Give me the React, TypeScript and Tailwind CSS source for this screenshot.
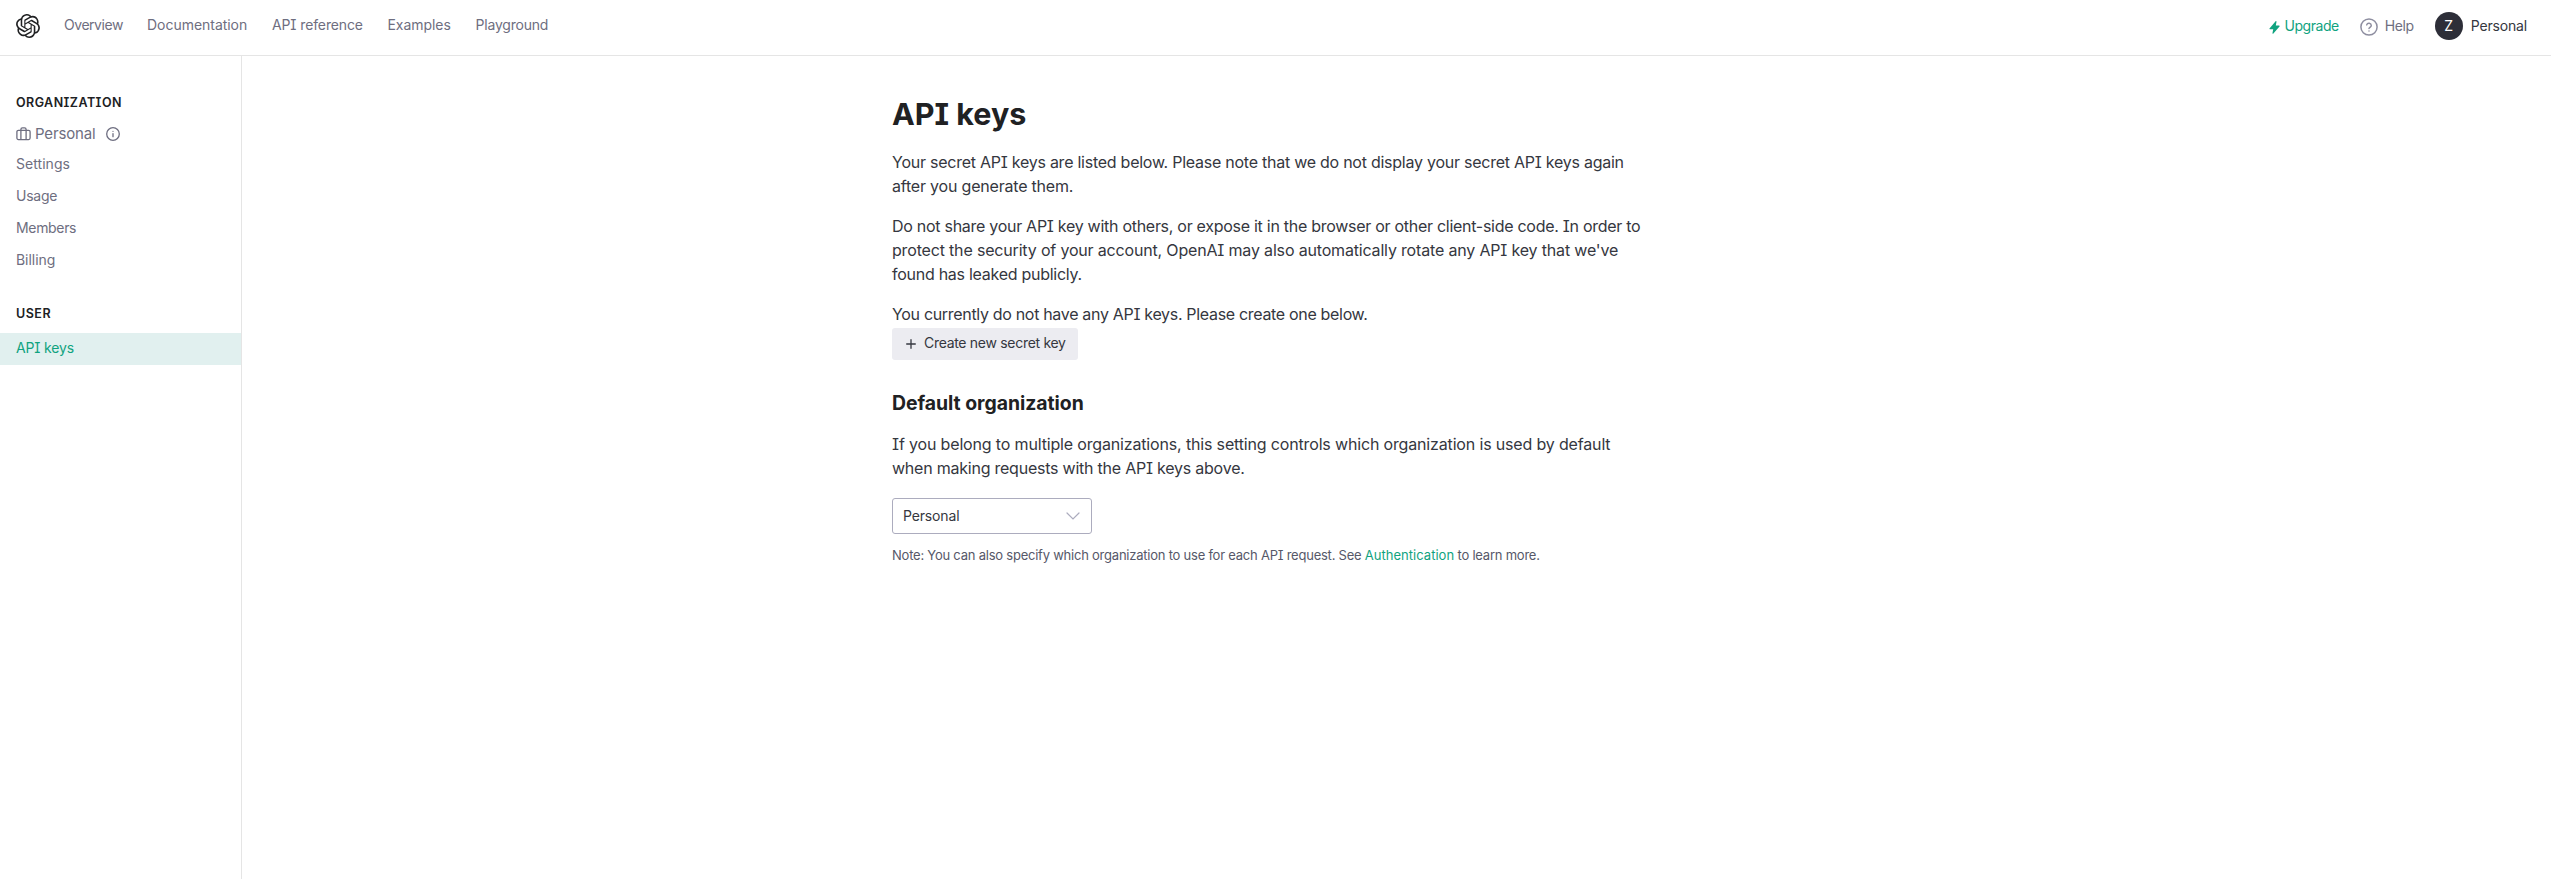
import { SiOpenai } from "react-icons/si";

const navLinks = [
  { label: "Overview", style: "w-[59px] tracking-[-0.46px]" },
  { label: "Documentation", style: "w-[101px] tracking-[-0.03px]" },
  { label: "API reference", style: "w-[91.5px] tracking-[-0.12px]" },
  { label: "Examples", style: "w-[64px] tracking-[-0.06px]" },
  { label: "Playground", style: "w-[74px] tracking-[-0.2px]" },
];

const orgLinks = [
  { label: "Settings", style: "tracking-[0.05px]" },
  { label: "Usage", style: "tracking-[-0.25px]" },
  { label: "Members", style: "tracking-[-0.33px]" },
  { label: "Billing", style: "tracking-[-0.05px]" },
];

function BoltIcon() {
  return (
    <svg width="11" height="13" viewBox="0 0 11 13" fill="#10a37f" className="mt-0.5" aria-hidden="true">
      <path d="M6.6 0.3c.4-.4 1-.1.9.5L6.8 4.6h3.3c.5 0 .7.6.4.9L4.4 12.6c-.4.4-1 .1-.9-.5l.7-3.8H.9c-.5 0-.7-.6-.4-.9z" />
    </svg>
  );
}

function HelpIcon() {
  return (
    <svg width="18" height="18" viewBox="0 0 18 18" fill="none" stroke="#8e8ea0" strokeWidth="1.5" strokeLinecap="round" strokeLinejoin="round" className="mt-0.5" aria-hidden="true">
      <circle cx="9" cy="9" r="8.1" />
      <path d="M6.7 6.9a2.35 2.35 0 0 1 4.6.6c0 1.5-2.3 2-2.3 3" />
      <path d="M9 13.1v.01" />
    </svg>
  );
}

function BriefcaseIcon() {
  return (
    <svg width="16" height="16" viewBox="0 0 16 16" fill="none" stroke="#6e6e80" strokeWidth="1.3" strokeLinejoin="round" aria-hidden="true">
      <rect x="0.9" y="4.3" width="13.2" height="9.3" rx="1.5" />
      <path d="M4.9 13.6V3.4a1.5 1.5 0 0 1 1.5-1.5h2.2a1.5 1.5 0 0 1 1.5 1.5v10.2" />
    </svg>
  );
}

function InfoIcon() {
  return (
    <svg width="14" height="14" viewBox="0 0 14 14" fill="none" stroke="#6e6e80" strokeWidth="1.3" strokeLinecap="round" aria-hidden="true">
      <circle cx="7" cy="7" r="6.3" />
      <path d="M7 6.6v3.1M7 4.3v.01" />
    </svg>
  );
}

function PlusIcon() {
  return (
    <svg width="10" height="10" viewBox="0 0 10 10" stroke="#353740" strokeWidth="1.3" strokeLinecap="round" aria-hidden="true">
      <path d="M5 0.7v8.6M0.7 5h8.6" />
    </svg>
  );
}

function ChevronIcon() {
  return (
    <svg width="14" height="8" viewBox="0 0 14 8" fill="none" stroke="#acacbe" strokeWidth="1.2" strokeLinecap="round" aria-hidden="true">
      <path d="M1 1l6 6 6-6" />
    </svg>
  );
}

export default function App() {
  return (
    <div className="flex h-[879px] flex-col bg-white font-['Inter',sans-serif] text-[14px] text-[#353740] [font-feature-settings:'cv08']">
      <header className="flex h-14 shrink-0 items-start justify-between border-b border-[#e5e5e5] pr-6 pl-4">
        <div className="flex items-start">
          <SiOpenai className="mt-3.5 size-6 text-[#202123]" />
          <nav className="ml-6 flex gap-6 pt-[15px] leading-5 text-[#6e6e80]">
            {navLinks.map((l) => (
              <a key={l.label} className={`${l.style} whitespace-nowrap`}>{l.label}</a>
            ))}
          </nav>
        </div>
        <div className="flex items-center pt-3 leading-7">
          <BoltIcon />
          <span className="ml-[5px] tracking-[-0.45px] text-[#10a37f]">Upgrade</span>
          <span className="ml-[21.5px]"><HelpIcon /></span>
          <span className="ml-[6.5px] tracking-[-0.4px] text-[#6e6e80]">Help</span>
          <span className="ml-[21px] flex size-7 items-center justify-center rounded-full bg-[#2d2e38] text-[14px] leading-[26px] text-white">Z</span>
          <span className="ml-2 tracking-[-0.17px]">Personal</span>
        </div>
      </header>
      <div className="flex min-h-0 flex-1">
        <aside className="w-[242px] shrink-0 border-r border-[#e5e5e5] pt-[37px]">
          <h2 className="px-4 text-[12.5px] leading-5 font-semibold tracking-[0.45px] text-[#202123]">ORGANIZATION</h2>
          <div className="mt-[9px] mb-[2px] flex h-6 items-center px-4 text-[15px] text-[#6e6e80]">
            <BriefcaseIcon />
            <span className="ml-[3px] tracking-[-0.15px]">Personal</span>
            <span className="ml-[10.5px]"><InfoIcon /></span>
          </div>
          {orgLinks.map((l) => (
            <a key={l.label} className={`${l.style} block h-8 px-4 leading-8 text-[#6e6e80]`}>{l.label}</a>
          ))}
          <h2 className="mt-7 mb-[9px] px-4 text-[12.5px] leading-5 font-semibold tracking-[0.5px] text-[#202123]">USER</h2>
          <a className="block h-8 bg-[#e1f0ef] px-4 leading-[30px] tracking-[-0.15px] text-[#10a37f]">API keys</a>
        </aside>
        <main className="min-w-0 flex-1 pt-[38px] pl-[650px]">
          <h1 className="mb-4 text-[30.5px] leading-10 font-bold text-[#202123]">API keys</h1>
          <div className="text-base leading-6 whitespace-nowrap">
            <p className="mb-4">
              <span className="tracking-[-0.25px]">Your secret API keys are listed below. Please note that we do not display your secret API keys again</span><br />
              <span className="tracking-[-0.2px]">after you generate them.</span>
            </p>
            <p className="mb-4">
              <span className="tracking-[-0.28px]">Do not share your API key with others, or expose it in the browser or other client-side code. In order to</span><br />
              <span className="tracking-[-0.173px]">protect the security of your account, OpenAI may also automatically rotate any API key that we've</span><br />
              <span className="tracking-[-0.27px]">found has leaked publicly.</span>
            </p>
            <p className="tracking-[-0.32px]">You currently do not have any API keys. Please create one below.</p>
          </div>
          <button className="mt-0.5 flex h-8 w-[186px] items-center rounded-[3px] bg-[#ececf1] pl-3.5">
            <PlusIcon />
            <span className="mb-0.5 ml-2 leading-[30px] tracking-[-0.3px] whitespace-nowrap">Create new secret key</span>
          </button>
          <h2 className="mt-[27px] text-[19.4px] leading-8 font-bold tracking-[-0.03px] text-[#202123]">Default organization</h2>
          <p className="mt-[13px] text-base leading-6 whitespace-nowrap">
            <span className="tracking-[-0.16px]">If you belong to multiple organizations, this setting controls which organization is used by default</span><br />
            <span className="tracking-[-0.23px]">when making requests with the API keys above.</span>
          </p>
          <div className="mt-[18px] flex h-9 w-[200px] items-center justify-between rounded-[3px] border border-[#acacbe] pr-[11px] pl-2.5">
            <span className="mb-0.5 tracking-[-0.15px]">Personal</span>
            <ChevronIcon />
          </div>
          <p className="mt-[11px] text-[13px] leading-5 tracking-[-0.229px] whitespace-nowrap text-[#565869]">
            Note: You can also specify which organization to use for each API request. See{" "}
            <a className="tracking-[0.02px] text-[#10a37f]">Authentication</a> to learn more.
          </p>
        </main>
      </div>
    </div>
  );
}
